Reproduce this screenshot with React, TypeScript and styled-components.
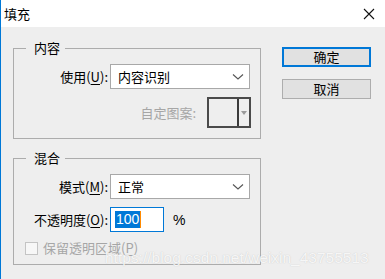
import styled, { createGlobalStyle } from "styled-components";

const Global = createGlobalStyle`
  html, body { margin: 0; padding: 0; }
  body {
    font-family: "Noto Sans CJK SC", "Noto Sans", sans-serif;
    font-size: 13px;
    color: #000;
    background: #eeeeee;
  }
`

const Window = styled.div`
  position: relative;
  width: 385px;
  height: 279px;
  background: #eeeeee;
  border-left: 1px solid #0078d7;
  box-sizing: border-box;
  overflow: hidden;
`
const TitleBar = styled.div`
  height: 27px;
  background: #ffffff;
  display: flex;
  align-items: center;
  justify-content: space-between;
  padding: 0 10px 0 3px;
  font-size: 13px;
  line-height: 16px;
`
const Body = styled.div`
  display: flex;
  padding: 13px 0 0 12px;
`
const LeftCol = styled.div`
  width: 248px;
  display: flex;
  flex-direction: column;
  gap: 11px;
`
const RightCol = styled.div`
  margin-left: 21px;
  padding-top: 7px;
  display: flex;
  flex-direction: column;
  gap: 12px;
`
const Group = styled.fieldset<{ pb: number }>`
  margin: 0;
  padding: 8px 0 ${p => p.pb}px 0;
  border: 1px solid #acacac;
  min-width: 0;
  display: flex;
  flex-direction: column;
  gap: 8px;
`
const Legend = styled.legend`
  margin-left: 12px;
  padding: 0 5px 0 8px;
  font-size: 13px;
  line-height: 16px;
`
const Row = styled.div<{ end?: boolean; h: number }>`
  display: flex;
  align-items: center;
  height: ${p => p.h}px;
  justify-content: ${p => (p.end ? "flex-end" : "flex-start")};
  padding-right: ${p => (p.end ? 9 : 0)}px;
`
const Label = styled.label<{ w?: number; dim?: boolean }>`
  width: ${p => (p.w ? p.w + "px" : "auto")};
  flex-shrink: 0;
  text-align: right;
  margin-right: 2px;
  line-height: 16px;
  color: ${p => (p.dim ? "#a6a6a6" : "#000")};
  u { text-underline-offset: 2px; }
`
const Select = styled.div`
  width: 140px;
  height: 25px;
  box-sizing: border-box;
  border: 1px solid #a8a8a8;
  background: #ffffff;
  display: flex;
  align-items: center;
  justify-content: space-between;
  padding: 0 5px 0 7px;
  line-height: 16px;
`
const Picker = styled.div`
  margin-left: 9px;
  width: 44px;
  height: 31px;
  box-sizing: border-box;
  border: 2px solid #4a4a4a;
  display: grid;
  grid-template-columns: 1fr 12px;
`
const PickerArrow = styled.div`
  border-left: 2px solid #3a3a3a;
  display: flex;
  align-items: center;
  justify-content: center;
`
const NumInput = styled.div`
  width: 54px;
  height: 25px;
  box-sizing: border-box;
  border: 1px solid #0078d7;
  background: #ffffff;
  display: flex;
  align-items: center;
  padding-left: 4px;
  font-family: "Liberation Sans", Arial, sans-serif;
  font-size: 14px;
`
const Selected = styled.span`
  background: #0078d7;
  color: #ffffff;
  line-height: 17px;
  padding: 0 1px;
  border-right: 1px solid #ff8a00;
`
const Unit = styled.span`
  margin-left: 9px;
  font-family: "Liberation Sans", Arial, sans-serif;
  font-size: 14px;
`
const Check = styled.span`
  width: 13px;
  height: 13px;
  box-sizing: border-box;
  border: 1px solid #c4c4c4;
  background: #f7f7f7;
  margin: 0 5px 0 11px;
`
const Button = styled.button<{ primary?: boolean }>`
  width: 89px;
  height: 20px;
  box-sizing: border-box;
  margin: 0;
  padding: 0;
  background: #e1e1e1;
  border: ${p => (p.primary ? "2px solid #0078d7" : "1px solid #adadad")};
  font-family: "Noto Sans CJK SC", sans-serif;
  font-size: 13px;
  line-height: 16px;
  color: #000;
`
const Watermark = styled.div`
  position: absolute;
  left: 104px;
  top: 249px;
  font-family: "Liberation Sans", Arial, sans-serif;
  font-size: 15.5px;
  color: rgba(255, 255, 255, 0.85);
  text-shadow: 0 0 1px rgba(150, 150, 150, 0.5);
  white-space: nowrap;
`

const Chevron = () => (
  <svg width="12" height="8" viewBox="0 0 12 8">
    <polyline points="1,1.5 6,6 11,1.5" fill="none" stroke="#555" strokeWidth="1.1" />
  </svg>
)

export default function App() {
  return (
    <>
      <Global />
      <Window>
        <TitleBar>
          <span>填充</span>
          <svg width="12" height="12" viewBox="0 0 12 12">
            <path d="M1 1 L11 11 M11 1 L1 11" stroke="#111" strokeWidth="1.1" />
          </svg>
        </TitleBar>
        <Body>
          <LeftCol>
            <Group pb={10}>
              <Legend>内容</Legend>
              <Row h={25}>
                <Label w={94}>使用(<u>U</u>):</Label>
                <Select>
                  <span>内容识别</span>
                  <Chevron />
                </Select>
              </Row>
              <Row h={31} end>
                <Label dim>自定图案:</Label>
                <Picker>
                  <div />
                  <PickerArrow>
                    <svg width="6" height="4" viewBox="0 0 6 4">
                      <polygon points="0,0 6,0 3,4" fill="#9a9a9a" />
                    </svg>
                  </PickerArrow>
                </Picker>
              </Row>
            </Group>
            <Group pb={8}>
              <Legend>混合</Legend>
              <Row h={25}>
                <Label w={94}>模式(<u>M</u>):</Label>
                <Select>
                  <span>正常</span>
                  <Chevron />
                </Select>
              </Row>
              <Row h={25}>
                <Label w={94}>不透明度(<u>O</u>):</Label>
                <NumInput>
                  <Selected>100</Selected>
                </NumInput>
                <Unit>%</Unit>
              </Row>
              <Row h={16}>
                <Check />
                <Label dim>保留透明区域(<u>P</u>)</Label>
              </Row>
            </Group>
          </LeftCol>
          <RightCol>
            <Button primary>确定</Button>
            <Button>取消</Button>
          </RightCol>
        </Body>
        <Watermark>https://blog.csdn.net/weixin_43755513</Watermark>
      </Window>
    </>
  )
}
